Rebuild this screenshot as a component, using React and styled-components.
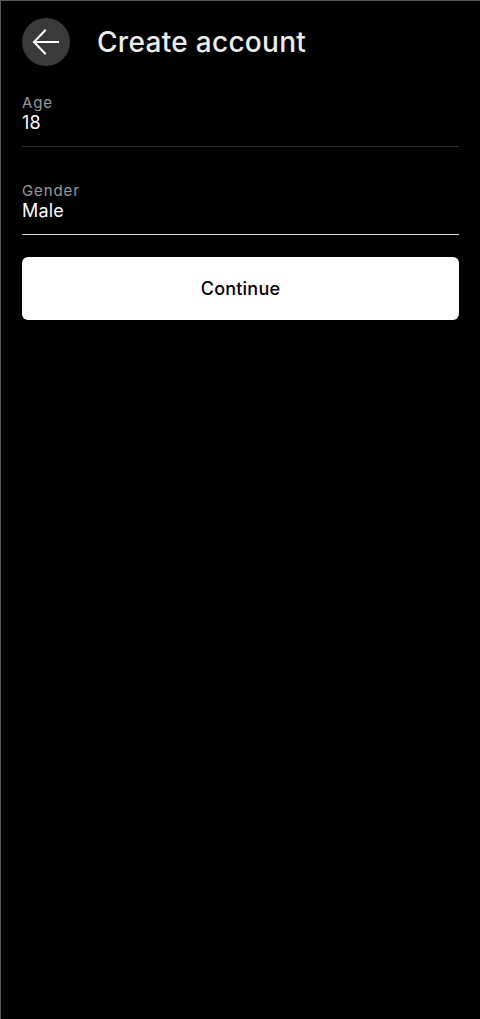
import React from 'react';
import styled, { createGlobalStyle } from 'styled-components';

const GlobalStyle = createGlobalStyle`
  html, body {
    margin: 0;
    padding: 0;
    background: #000;
  }
  body {
    font-family: Inter, "Noto Sans", sans-serif;
  }
`;

// Layout
const Screen = styled.div`
  box-sizing: border-box;
  width: 480px;
  min-height: 1019px;
  background: #000;
  border-top: 1px solid #5a5a5a;
  border-left: 1px solid #5a5a5a;
  padding: 17px 21px 0 21px;
`;
const Header = styled.header`
  display: flex;
  align-items: center;
  gap: 27px;
  height: 48px;
`;
const BackButton = styled.button`
  width: 48px;
  height: 48px;
  border-radius: 50%;
  border: none;
  padding: 0;
  background: #3a3a3a;
  display: flex;
  align-items: center;
  justify-content: center;
  cursor: pointer;
`;
const Title = styled.h1`
  margin: 0;
  font-size: 28px;
  font-weight: 500;
  color: #ececec;
  letter-spacing: 0.3px;
`;
const Field = styled.div`
  margin-top: ${props => props.first ? '28px' : '35px'};
  padding-bottom: 12px;
  border-bottom: 1px solid ${props => props.active ? '#d6d6d6' : '#333'};
`;
const Label = styled.div`
  font-size: 15px;
  line-height: 18px;
  color: #9a9a9a;
  letter-spacing: 0.9px;
`;
const Value = styled.div`
  font-size: 18px;
  line-height: 22px;
  color: #fff;
  letter-spacing: 0.2px;
`;
const PrimaryButton = styled.button`
  display: block;
  width: 100%;
  height: 63px;
  margin-top: 22px;
  border: none;
  border-radius: 6px;
  background: #fff;
  color: #000;
  font-family: Inter, "Noto Sans", sans-serif;
  font-size: 18px;
  font-weight: 500;
  letter-spacing: 0.2px;
  cursor: pointer;
`;

const ArrowLeft = () => (
  <svg width="30" height="30" viewBox="0 0 30 30" fill="none">
    <path
      d="M27 15H3M14 3.5L3 15l11 11.5"
      stroke="#fff"
      strokeWidth="2"
      strokeLinecap="square"
    />
  </svg>
);

const App = () => (
  <>
    <GlobalStyle />
    <Screen>
      <Header>
        <BackButton aria-label="Back">
          <ArrowLeft />
        </BackButton>
        <Title>Create account</Title>
      </Header>
      <Field first>
        <Label>Age</Label>
        <Value>18</Value>
      </Field>
      <Field active>
        <Label>Gender</Label>
        <Value>Male</Value>
      </Field>
      <PrimaryButton>Continue</PrimaryButton>
    </Screen>
  </>
);

export default App;
